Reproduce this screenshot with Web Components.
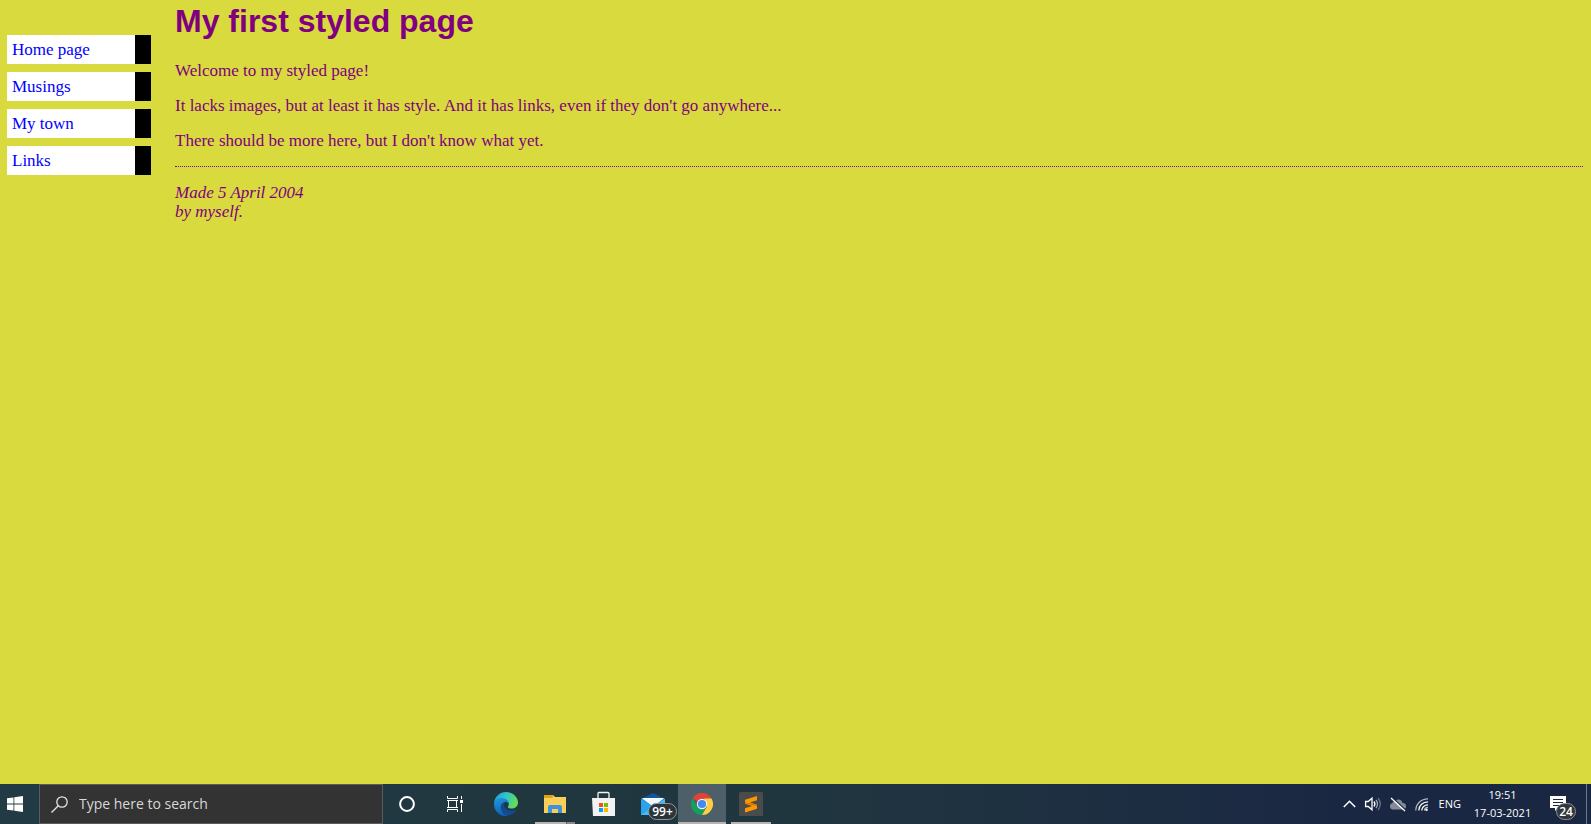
<!DOCTYPE html>
<html lang="en">
<head>
<meta charset="utf-8">
<title>My first styled page</title>
<style>
  html, body { height: 100%; }
  body {
    margin: 0;
    display: flex;
    flex-direction: column;
    background: #d8da3d;
    color: purple;
    font-family: Georgia, "Liberation Serif", serif;
    font-size: 17px;
    line-height: 18px;
  }
</style>
</head>
<body>
<styled-page>
  <side-nav slot="nav">
    <nav-link href="#home">Home page</nav-link>
    <nav-link href="#musings">Musings</nav-link>
    <nav-link href="#town">My town</nav-link>
    <nav-link href="#links">Links</nav-link>
  </side-nav>
  <page-article>
    <span slot="title">My first styled page</span>
    <p>Welcome to my styled page!</p>
    <p>It lacks images, but at least it has style. And it has links, even if they don't go anywhere...</p>
    <p>There should be more here, but I don't know what yet.</p>
    <span slot="sign">Made 5 April 2004<br>by myself.</span>
  </page-article>
</styled-page>
<task-bar></task-bar>

<script>
const define = (name, html) => customElements.define(name, class extends HTMLElement {
  constructor() {
    super();
    this.attachShadow({ mode: "open" }).innerHTML = html;
  }
});

define("styled-page", `
<style>
  :host { flex: 1; display: flex; gap: 24px; padding: 3px 8px 16px 7px; }
  main { flex: 1; min-width: 0; }
</style>
<slot name="nav"></slot>
<main><slot></slot></main>`);

define("side-nav", `
<style>
  :host { display: block; width: 144px; padding-top: 32px; }
  nav { display: flex; flex-direction: column; gap: 8px; }
</style>
<nav aria-label="Pages"><slot></slot></nav>`);

customElements.define("nav-link", class extends HTMLElement {
  constructor() {
    super();
    this.attachShadow({ mode: "open" }).innerHTML = `
<style>
  :host { display: block; }
  a { display: block; padding: 5px; background: #fff; border-right: 16px solid #000;
      color: blue; text-decoration: none; line-height: 19px; }
</style>
<a><slot></slot></a>`;
  }
  connectedCallback() {
    this.shadowRoot.querySelector("a").href = this.getAttribute("href");
  }
});

define("page-article", `
<style>
  :host { display: block; }
  h1 { margin: 0 0 23px; font: bold 32px/36px Helvetica, Arial, "Liberation Sans", sans-serif; }
  .text { display: flex; flex-direction: column; gap: 17px; }
  ::slotted(p) { margin: 0; }
  address { margin-top: 16px; padding-top: 16px; border-top: 1px dotted; line-height: 19px; }
</style>
<h1><slot name="title"></slot></h1>
<div class="text"><slot></slot></div>
<address><slot name="sign"></slot></address>`);

define("search-box", `
<style>
  :host { display: block; width: 344px; }
  label { box-sizing: border-box; height: 40px; display: flex; align-items: center; gap: 11px;
          padding: 0 11px; background: #333; border: 1px solid #5c5c5c; }
  svg { flex: none; }
  input { flex: 1; min-width: 0; padding: 0; border: 0; outline: 0; background: none; color: #d8d8d8;
          font: 14px/20px "Open Sans", "Noto Sans", sans-serif; }
  input::placeholder { color: #d8d8d8; opacity: 1; }
</style>
<label>
  <svg width="17" height="17" fill="none" stroke="#e6e6e6" stroke-width="1.3"><circle cx="11" cy="6" r="5.2"/><path d="M7.3 9.7 .5 16.5"/></svg>
  <input type="search" aria-label="Search" placeholder="Type here to search">
</label>`);

customElements.define("task-button", class extends HTMLElement {
  constructor() {
    super();
    this.attachShadow({ mode: "open" }).innerHTML = `
<style>
  :host { display: block; width: 48px; }
  :host([size=start]) { width: 39px; }
  button { position: relative; width: 100%; height: 40px; display: flex; align-items: center; justify-content: center;
           margin: 0; border: 0; padding: 0; background: none; }
  :host([size=start]) button { justify-content: flex-start; padding-left: 7px; }
  :host([active]) button { background: #4d6069; }
  :host([running]) button::after { content: ""; position: absolute; bottom: 0; left: 4px; right: 4px; height: 2px; background: #b9b4b2; }
  :host([active]) button::after { left: 0; right: 0; }
  :host([running=many]) button::after { background: linear-gradient(90deg, #b9b4b2 31px, #5d6468 31px, #5d6468 32px, #8b8888 32px); }
  ::slotted(svg) { display: block; overflow: visible; }
  ::slotted(span) { position: absolute; box-sizing: border-box; left: 19px; top: 19px; width: 29px; height: 17px;
    border: 1px solid #90979a; border-radius: 9px; background: #2b3439; color: #fff;
    font: 600 12px/15px "Open Sans", sans-serif; text-align: center; }
</style>
<button type="button"><slot></slot></button>`;
  }
  connectedCallback() {
    this.shadowRoot.querySelector("button").setAttribute("aria-label", this.getAttribute("name"));
  }
});

define("system-tray", `
<style>
  :host { display: flex; align-items: center; color: #fff; font: 11px/18px "Open Sans", "Noto Sans", sans-serif; }
  .icons { display: flex; align-items: center; gap: 9px; margin-right: 10px; }
  button { display: block; margin: 0; border: 0; padding: 0; background: none; color: inherit; font: inherit; }
  svg { display: block; overflow: visible; }
  .clock { margin: 0 13px; width: 57px; display: flex; flex-direction: column; align-items: center; white-space: nowrap; }
  .notes { position: relative; margin: 0 20px 0 6px; }
  .notes span { position: absolute; box-sizing: border-box; left: 6px; top: 7px; width: 20px; height: 17px; border: 1px solid #8d9196;
    border-radius: 9px; background: #31363c; font: 600 12px/15px "Open Sans", sans-serif; text-align: center; }
  .desktop { width: 4px; height: 40px; border-left: 1px solid #6f7885; }
</style>
<div class="icons">
  <button type="button" aria-label="Show hidden icons"><svg width="13" height="16" fill="none" stroke="#fff" stroke-width="1.5"><path d="M.8 11 6.5 5.300 12.200 11"/></svg></button>
  <button type="button" aria-label="Volume"><svg width="16" height="16" fill="none" stroke="#fff" stroke-width="1.3"><path d="M.6 5.500h2.600L7 2.200v11.600l-3.800-3.300H.6z"/><path d="M9 5.500q1.800 2.500 0 5"/><path d="M11 4q3 4 0 8" stroke="#a2a8b3"/><path d="M13 2q4.600 6 0 12" stroke="#697385"/></svg></button>
  <button type="button" aria-label="Cloud storage"><svg width="16" height="16"><path d="M3 13.500a3.300 3.300 0 0 1-.5-6.500A3.500 3.500 0 0 1 6 4.500a4 4 0 0 1 6.500 2.500a3.300 3.300 0 0 1 1 6.500z" fill="#858c98"/><path d="M2 1.500 15.500 14" stroke="#1a2742" stroke-width="1.500"/><path d="M1 2 15 15" stroke="#fff" stroke-width="1.300"/></svg></button>
  <button type="button" aria-label="Network"><svg width="14" height="16" fill="none" stroke="#fff" stroke-width="1.200"><path d="M.8 14.500C.8 8 6 2.800 13 2.800" stroke="#b5bbc4"/><path d="M3.800 14.500c0-5 4-8.700 9.200-8.700M6.800 14.500c0-3.200 2.700-5.700 6.200-5.700"/><path d="M9.500 14.500c0-1.800 1.600-3.200 3.500-3.200" stroke="#b5bbc4"/><circle cx="11.500" cy="13.800" r="1.300" fill="#fff" stroke="none"/></svg></button>
</div>
<button type="button" aria-label="Input language">ENG</button>
<button type="button" class="clock"><time>19:51</time><time>17-03-2021</time></button>
<button type="button" class="notes" aria-label="Notifications"><svg width="16" height="16"><path d="M0 0h16v12H8l-3 3v-3H0z" fill="#fff"/><path d="M3 3.500h10M3 6.500h10M3 9.500h7" stroke="#1a2742"/></svg><span>24</span></button>
<div class="desktop"></div>`);

define("task-bar", `
<style>
  :host { display: flex; height: 40px; background: linear-gradient(90deg, #213a43, #20363f 50%, #1c2c42 75%, #1a2742 84%); }
  .apps { display: flex; gap: 1px; margin-left: 3px; }
  system-tray { margin-left: auto; }
</style>
<task-button size="start" name="Start"><svg width="16" height="16" fill="#fff"><path d="M0 2.300 6.500 1.400V7.600H0zM7.300 1.300 16 0V7.600H7.300zM0 8.400H6.500V14.600L0 13.700zM7.300 8.400H16V16L7.300 14.700z"/></svg></task-button>
<search-box></search-box>
<task-button name="Cortana"><svg width="16" height="16"><circle cx="8" cy="8" r="6.900" fill="none" stroke="#fff" stroke-width="2"/></svg></task-button>
<task-button name="Task view"><svg width="16" height="16" fill="none" stroke="#fff"><path d="M.5 0V2.500H10.500V0M.5 16V13.500H10.500V16M0 4.500H11M0 11.500H11M1.500 4.500V11.500M9.500 4.500V11.500M14.500 0V3M14.500 8V16"/><path d="M13 4h3v3h-3z" fill="#fff" stroke="none"/></svg></task-button>
<div class="apps">
  <task-button name="Edge"><svg width="24" height="24" viewBox="0 0 24 24">
    <defs><linearGradient id="e1" x1="0" y1="0" x2="1" y2=".3"><stop stop-color="#1e9ae0"/><stop offset=".5" stop-color="#2ec3d2"/><stop offset="1" stop-color="#62dd58"/></linearGradient>
    <linearGradient id="e2" x1="0" y1="0" x2=".3" y2="1"><stop stop-color="#2199dd"/><stop offset="1" stop-color="#0d62b8"/></linearGradient></defs>
    <path d="M0 11C1 4 6 0 12 0c7 0 12 5 12 10.500 0 4-3 6-6.500 6-3 0-4-1-3.500-2 1.500-2 1-5.500-3-7C7 6 2 7 0 11z" fill="url(#e1)"/>
    <path d="M0 12C.5 8 3.500 6 7.500 6c4.500 0 7.500 3 7.500 6-1-1.500-2.500-2-4-2C7 11 6 15 8 19c1.500 3 4 4.500 6 4.700C6 25.500 0 19 0 12z" fill="url(#e2)"/>
    <path d="M11 10C6 12 6.500 18 9.500 21.500c3 3 9 2.500 12.800-3.200.3-.5 0-.8-.5-.5-5 2.500-11.800-.3-11.800-5.300 0-1 .3-1.800 1-2.500z" fill="#124b94"/></svg></task-button>
  <task-button name="File Explorer" running="many"><svg width="22" height="18"><path d="M0 0h9l2 2h11v16H0z" fill="#f9cf58"/><path d="M0 0h8.500l1 1-1.500 2H0z" fill="#e0a013"/><path d="M4 18v-6q0-2 2-2h10q2 0 2 2v6h-4v-4H8v4z" fill="#3d94dc"/></svg></task-button>
  <task-button name="Store"><svg width="24" height="24"><path d="M6 7V1.500q0-1 1-1h9q1 0 1 1V7" fill="none" stroke="#f4f4f4" stroke-width="1.300"/><path d="M0 6h23v18H1z" fill="#f2f2f2"/><path d="M7 11h4v4H7z" fill="#f0501f"/><path d="M12 11h4v4h-4z" fill="#7fb900"/><path d="M7 16h4v4H7z" fill="#02a3ee"/><path d="M12 16h4v4h-4z" fill="#feb800"/></svg></task-button>
  <task-button name="Mail"><svg width="24" height="24"><path d="M0 7 12 1l12 6-2 8H2z" fill="#0d57a4"/><path d="M1 6h22l-11 9z" fill="#fff"/><path d="M0 6.500 12 14l12-7.500V23H0z" fill="#29a4ea"/><path d="m1 6.500 11 7.500 11-7.500z" fill="#f3f6f8"/><path d="M0 23 24 7v16z" fill="#45bdf4"/></svg><span>99+</span></task-button>
  <task-button name="Chrome" running active><svg width="22" height="22" viewBox="-11 -11 22 22"><path d="M0 0-9.530-5.500A11 11 0 0 1 9.530-5.500z" fill="#dc4437"/><path d="M-9.530-5.500A11 11 0 0 0 0 11L4.500 2.600-4.500 2.600z" fill="#159f5c"/><path d="M9.530-5.500A11 11 0 0 1 0 11L5 2.500 2-5.500z" fill="#ffce44"/><circle r="5.200" fill="#f1f1f1"/><circle r="4.100" fill="#4688f1"/></svg></task-button>
  <task-button name="Sublime Text" running><svg width="24" height="24"><rect width="24" height="24" rx="1.500" fill="#4b4b4b"/><path d="M18 4v4.200L11 10.500l7 2.200v4.100L6 20.500v-4.200l7-2.300-7-2.200V7.700z" fill="#ff9800"/><path d="m6 11.800 0-1.500 12 2.400v1.500z" fill="#d97b00"/></svg></task-button>
</div>
<system-tray></system-tray>`);
</script>
</body>
</html>
